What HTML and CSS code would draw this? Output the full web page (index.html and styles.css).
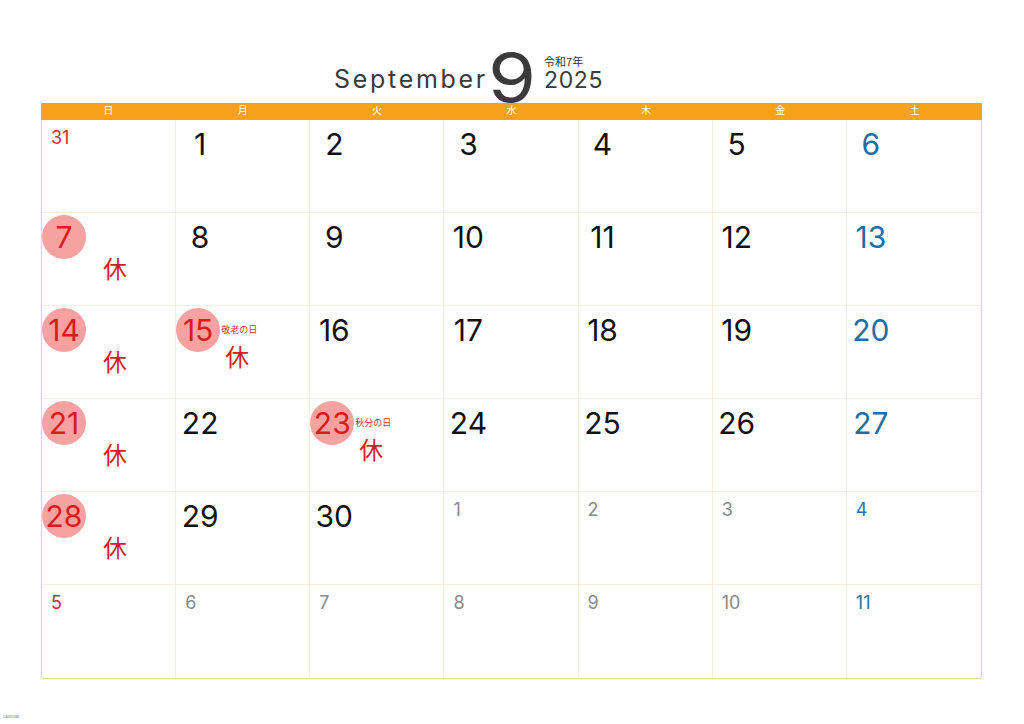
FILE: index.html
```html
<!DOCTYPE html>
<html lang="ja">
<head>
<meta charset="utf-8">
<title>September 2025</title>
<link rel="stylesheet" href="styles.css">
</head>
<body>
<header class="title">
  <span class="month">September</span>
  <span class="big">9</span>
  <span class="yearblock"><span class="era">令和7年</span><span class="year">2025</span></span>
</header>
<section class="cal">
  <div class="weekdays">
    <span>日</span><span>月</span><span>火</span><span>水</span><span>木</span><span>金</span><span>土</span>
  </div>
  <div class="grid">
    <div class="cell"><span class="small sun">31</span></div>
    <div class="cell"><span class="num">1</span></div>
    <div class="cell"><span class="num">2</span></div>
    <div class="cell"><span class="num">3</span></div>
    <div class="cell"><span class="num">4</span></div>
    <div class="cell"><span class="num">5</span></div>
    <div class="cell last"><span class="num sat">6</span></div>

    <div class="cell"><span class="num hol">7</span><span class="yasumi">休</span></div>
    <div class="cell"><span class="num">8</span></div>
    <div class="cell"><span class="num">9</span></div>
    <div class="cell"><span class="num">10</span></div>
    <div class="cell"><span class="num">11</span></div>
    <div class="cell"><span class="num">12</span></div>
    <div class="cell last"><span class="num sat">13</span></div>

    <div class="cell"><span class="num hol">14</span><span class="yasumi">休</span></div>
    <div class="cell"><div class="head"><span class="num hol">15</span><span class="hname">敬老の日</span></div><span class="yasumi named">休</span></div>
    <div class="cell"><span class="num">16</span></div>
    <div class="cell"><span class="num">17</span></div>
    <div class="cell"><span class="num">18</span></div>
    <div class="cell"><span class="num">19</span></div>
    <div class="cell last"><span class="num sat">20</span></div>

    <div class="cell"><span class="num hol">21</span><span class="yasumi">休</span></div>
    <div class="cell"><span class="num">22</span></div>
    <div class="cell"><div class="head"><span class="num hol">23</span><span class="hname">秋分の日</span></div><span class="yasumi named">休</span></div>
    <div class="cell"><span class="num">24</span></div>
    <div class="cell"><span class="num">25</span></div>
    <div class="cell"><span class="num">26</span></div>
    <div class="cell last"><span class="num sat">27</span></div>

    <div class="cell"><span class="num hol">28</span><span class="yasumi">休</span></div>
    <div class="cell"><span class="num">29</span></div>
    <div class="cell"><span class="num">30</span></div>
    <div class="cell"><span class="small other">1</span></div>
    <div class="cell"><span class="small other">2</span></div>
    <div class="cell"><span class="small other">3</span></div>
    <div class="cell last"><span class="small sat">4</span></div>

    <div class="cell bottom"><span class="small sun">5</span></div>
    <div class="cell bottom"><span class="small other">6</span></div>
    <div class="cell bottom"><span class="small other">7</span></div>
    <div class="cell bottom"><span class="small other">8</span></div>
    <div class="cell bottom"><span class="small other">9</span></div>
    <div class="cell bottom"><span class="small other">10</span></div>
    <div class="cell bottom last"><span class="small sat">11</span></div>
  </div>
</section>
<footer class="credit">calendar</footer>
</body>
</html>
```
FILE: styles.css
```css
* { box-sizing: border-box; }
html, body { margin: 0; padding: 0; background: #fff; }
body {
  width: 1024px;
  height: 724px;
  overflow: hidden;
  font-family: Inter, "Noto Sans", "Noto Sans CJK JP", sans-serif;
  color: #111;
}
.title {
  height: 103px;
  display: flex;
  align-items: flex-end;
  padding-left: 334px;
}
.month {
  font-size: 25px;
  line-height: 24px;
  letter-spacing: 2.7px;
  color: #3a3a3a;
  margin-bottom: 12px;
}
.big {
  display: inline-block;
  font-size: 68px;
  line-height: 50px;
  color: #3a3a3a;
  margin: 0 14px 1px 0;
  transform: scaleX(1.14);
  transform-origin: left center;
}
.yearblock {
  display: flex;
  flex-direction: column;
  margin-bottom: 12px;
}
.era {
  font-family: "Noto Sans CJK JP", sans-serif;
  font-size: 11px;
  line-height: 16px;
  color: #333;
  margin-bottom: 0;
}
.year {
  font-size: 23px;
  line-height: 22px;
  letter-spacing: 0.6px;
  color: #3a3a3a;
}
.cal {
  margin-left: 41px;
  width: 941px;
  border: 1px solid #e6dcae;
  border-top: 0;
}
.weekdays {
  height: 17px;
  background: #f8a11b;
  display: grid;
  grid-template-columns: repeat(7, 1fr);
  margin: 0 -1px;
}
.weekdays span {
  text-align: center;
  color: #fff;
  font-family: "Noto Sans CJK JP", sans-serif;
  font-size: 10px;
  line-height: 14px;
}
.grid {
  display: grid;
  grid-template-columns: repeat(7, 1fr);
  grid-template-rows: repeat(6, 93px);
}
.cell {
  position: relative;
  border-right: 1px solid #f5f0dc;
  border-bottom: 1px solid #f5f0dc;
  padding: 2px 0 0 2px;
}
.cell.last { border-right: 0; }
.cell.bottom { border-bottom: 0; }
.head {
  display: flex;
  align-items: center;
}
.num {
  display: flex;
  align-items: center;
  justify-content: center;
  width: 44px;
  height: 44px;
  font-size: 30px;
  line-height: 1;
  color: #111;
}
.num.sat { color: #1d6ea6; }
.num.hol {
  background: #f7a1a1;
  border-radius: 50%;
  color: #d81c1c;
  margin-left: -2px;
}
.hname {
  font-family: "Noto Sans CJK JP", sans-serif;
  font-size: 9px;
  line-height: 10px;
  color: #c8383a;
  margin-left: 1px;
}
.yasumi {
  display: block;
  font-family: "Noto Sans CJK JP", sans-serif;
  font-size: 24px;
  line-height: 24px;
  color: #d41e1e;
  margin: -3px 0 0 59px;
}
.yasumi.named { margin: -8px 0 0 47px; }
.small {
  display: block;
  font-size: 18px;
  line-height: 18px;
  margin: 7px 0 0 7px;
}
.small.sun { color: #d42a2a; }
.small.other { color: #8a8a8a; }
.small.sat { color: #2a72a8; }
.credit {
  margin: 36px 0 0 3px;
  font-size: 4px;
  line-height: 4px;
  color: #5b7fb5;
}
```
